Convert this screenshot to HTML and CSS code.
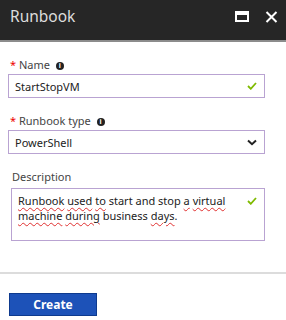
FILE: index.html
```html
<!DOCTYPE html>
<html lang="en">
<head>
    <meta charset="UTF-8">
    <title>Runbook</title>
    <link rel="stylesheet" href="styles.css">
</head>
<body>
<div class="blade">
    <div class="blade-header">
        <h1>Runbook</h1>
        <div class="blade-actions">
            <svg width="14" height="11" viewBox="0 0 14 11"><rect x="1" y="1" width="12" height="9" fill="none" stroke="#fff" stroke-width="2"/><rect x="1" y="1" width="12" height="3" fill="#fff"/></svg>
            <svg width="13" height="12" viewBox="0 0 13 12"><path d="M1.5 1 L11.5 11 M11.5 1 L1.5 11" stroke="#fff" stroke-width="2"/></svg>
        </div>
    </div>

    <div class="form">
        <div class="field">
            <label><span class="req">*</span> Name <span class="info">i</span></label>
            <div class="box">
                <span class="value">StartStopVM</span>
                <svg class="check" width="10" height="8" viewBox="0 0 10 8"><path d="M1 4 L3.8 6.8 L9 1" fill="none" stroke="#7fba00" stroke-width="1.8"/></svg>
            </div>
        </div>

        <div class="field">
            <label><span class="req">*</span> Runbook type <span class="info">i</span></label>
            <div class="box">
                <span class="value">PowerShell</span>
                <svg class="chev" width="10" height="7" viewBox="0 0 10 7"><path d="M1 1.5 L5 5.2 L9 1.5" fill="none" stroke="#222" stroke-width="2"/></svg>
            </div>
        </div>

        <div class="field">
            <label class="plain">Description</label>
            <div class="box area">
                <span class="value"><u>Runbook</u> <u>used</u> <u>to</u> start and stop <u>a</u> <u>virtual</u><br><u>machine</u> <u>during</u> business <u>days</u>.</span>
                <svg class="check" width="10" height="8" viewBox="0 0 10 8"><path d="M1 4 L3.8 6.8 L9 1" fill="none" stroke="#7fba00" stroke-width="1.8"/></svg>
            </div>
        </div>
    </div>

    <div class="footer">
        <button class="btn">Create</button>
    </div>
</div>
</body>
</html>
```

FILE: styles.css
```css
body { margin: 0; font-family: "Noto Sans", "Open Sans", sans-serif; background: #fff; color: #222; }
.blade { width: 286px; }

.blade-header {
    height: 40px;
    background: #262626;
    border-bottom: 2px solid #8c8c8c;
    display: flex;
    align-items: center;
    justify-content: space-between;
    padding: 0 8px 0 10px;
}
.blade-header h1 { margin: 0 0 8px; font-size: 15.5px; font-weight: normal; color: #ddd; }
.blade-actions { display: flex; gap: 16px; align-items: center; margin-bottom: 7px; }

.form { padding: 15px 21px 0 8px; }
.field { margin-bottom: 15px; }
.field label { display: block; font-size: 11px; line-height: 16px; color: #444; margin: 0 0 1px 2px; }
.field label.plain { margin: 0 0 3px 4px; }
.req { color: #e00; }
.info {
    display: inline-block;
    width: 8px; height: 8px;
    border-radius: 50%;
    background: #222;
    color: #fff;
    font-size: 7px;
    line-height: 8px;
    text-align: center;
    font-weight: bold;
    vertical-align: 1px;
    margin-left: 3px;
}

.box {
    border: 1px solid #b9a3d2;
    height: 22px;
    display: flex;
    align-items: center;
    justify-content: space-between;
    padding: 0 7px 0 6px;
    font-size: 11px;
}
.box.area { align-items: flex-start; padding-top: 4px; box-sizing: border-box; height: 53px; margin-left: 3px; }
.box.area .value { line-height: 15px; }
.box.area .check { margin-top: 4px; }
.box u { text-decoration: underline wavy #e03030; text-decoration-thickness: 1px; text-underline-offset: 2px; }

.footer { border-top: 2px solid #dcdcdc; margin-top: 31px; padding: 18px 9px; }
.btn {
    width: 88px; height: 23px;
    background: #1d52b8;
    border: 1px solid #0e3a8e;
    color: #fff;
    font-family: "Noto Sans", sans-serif;
    font-weight: bold;
    font-size: 12px;
    padding: 0;
}
```
